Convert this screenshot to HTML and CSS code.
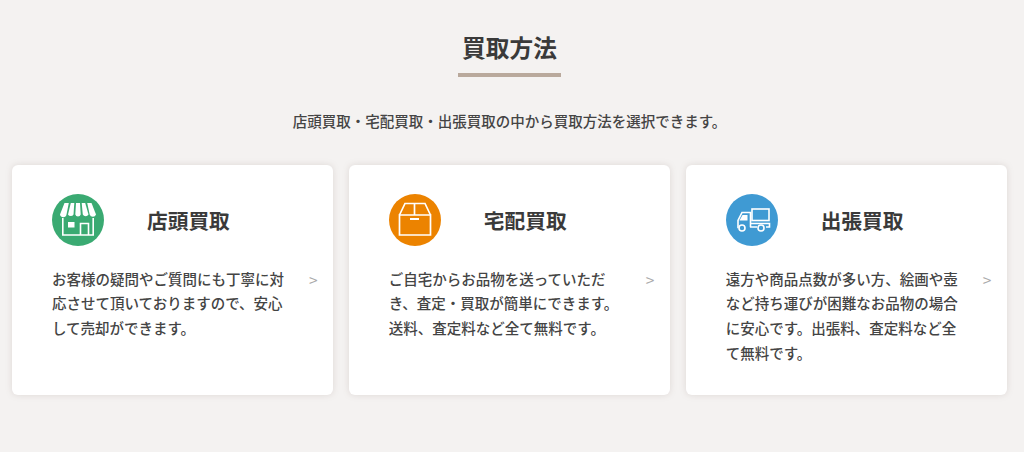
FILE: index.html
```html
<!DOCTYPE html>
<html lang="ja">
<head>
<meta charset="utf-8">
<title>買取方法</title>
<link rel="stylesheet" href="styles.css">
</head>
<body>
<section class="section">
  <h2 class="heading">買取方法</h2>
  <p class="lead">店頭買取・宅配買取・出張買取の中から買取方法を選択できます。</p>
  <div class="cards">
    <a class="card">
      <div class="card-head">
        <span class="icon icon-green">
          <svg viewBox="0 0 52 52" width="52" height="52" fill="none" stroke="#fff">
            <g fill="#fff" stroke="none">
              <path d="M12.500 9h4.300l-2.300 11.500a3.300 3.300 0 0 1-6.500 0z"/>
              <path d="M18.800 9h3.500l-.8 11.500a3.200 3.200 0 0 1-5.500 0z"/>
              <path d="M24 9h4l.7 11.500a2.800 2.800 0 0 1-5.400 0z"/>
              <path d="M29.700 9h3.500l3.300 11.500a3.200 3.200 0 0 1-5.700 0z"/>
              <path d="M35.200 9h4.300l4.500 11.500a3.300 3.300 0 0 1-6.300 0z"/>
            </g>
            <path d="M10.800 24v17h30.400V24" stroke-width="1.600"/>
            <path d="M28.500 41V29.500h8V41" stroke-width="1.600"/>
            <rect x="16" y="28" width="6.500" height="5.500" fill="#fff" stroke="none"/>
          </svg>
        </span>
        <h3 class="card-title">店頭買取</h3>
      </div>
      <div class="card-body">
        <p class="card-text">お客様の疑問やご質問にも丁寧に対応させて頂いておりますので、安心して売却ができます。</p>
        <span class="arrow">&gt;</span>
      </div>
    </a>
    <a class="card">
      <div class="card-head">
        <span class="icon icon-orange">
          <svg viewBox="0 0 52 52" width="52" height="52" fill="none" stroke="#fff" stroke-width="1.700">
            <path d="M10.500 21h31v20h-31z"/>
            <path d="M10.500 21l5.500-11.500h20L41.500 21M25.500 9.500V21"/>
            <rect x="21" y="24" width="9" height="2" fill="#fff" stroke="none"/>
          </svg>
        </span>
        <h3 class="card-title">宅配買取</h3>
      </div>
      <div class="card-body">
        <p class="card-text">ご自宅からお品物を送っていただき、査定・買取が簡単にできます。送料、査定料など全て無料です。</p>
        <span class="arrow">&gt;</span>
      </div>
    </a>
    <a class="card">
      <div class="card-head">
        <span class="icon icon-blue">
          <svg viewBox="0 0 52 52" width="52" height="52" fill="none" stroke="#fff" stroke-width="1.600">
            <rect x="26" y="15" width="17" height="11.500"/>
            <path d="M12.500 33.500h-.5v-7L16 18.500h8.500v14.700M24 33h7M40 33h3.500v-3.500H24.500"/>
            <path d="M16.500 21h5v5.500h-8z" fill="#fff" stroke="none"/>
            <circle cx="16" cy="34" r="3"/>
            <circle cx="35" cy="34" r="3"/>
          </svg>
        </span>
        <h3 class="card-title">出張買取</h3>
      </div>
      <div class="card-body">
        <p class="card-text">遠方や商品点数が多い方、絵画や壺など持ち運びが困難なお品物の場合に安心です。出張料、査定料など全て無料です。</p>
        <span class="arrow">&gt;</span>
      </div>
    </a>
  </div>
</section>
</body>
</html>
```
FILE: styles.css
```css
* { box-sizing: border-box; }
html, body { margin: 0; padding: 0; }
body {
  background: #f4f2f1;
  color: #333;
  font-family: "Noto Sans CJK JP", "Noto Sans", sans-serif;
  height: 452px;
  overflow: hidden;
}
.section { padding: 30px 17px 0 12px; display: flex; flex-direction: column; align-items: center; }
.heading {
  margin: 0;
  font-size: 23.700px;
  line-height: 34px;
  font-weight: 700;
  padding: 0 4.500px 9px;
  border-bottom: 4px solid #b9a99c;
  color: #3a3a3a;
}
.lead {
  margin: 33px 0 0;
  font-size: 14.500px;
  line-height: 22px;
  font-weight: 500;
  color: #444;
}
.cards {
  width: 100%;
  margin-top: 33px;
  display: grid;
  grid-template-columns: repeat(3, 1fr);
  gap: 15.500px;
}
.card {
  background: #fff;
  border-radius: 6px;
  height: 230px;
  padding: 29px 0 0 40px;
  box-shadow: 0 0 6px rgba(160, 140, 130, .25);
  display: block;
}
.card-head { display: flex; align-items: center; height: 52px; }
.icon { width: 52px; height: 52px; border-radius: 50%; display: block; flex: none; }
.icon svg { display: block; }
.icon-green { background: #3aaa72; }
.icon-orange { background: #ec8300; }
.icon-blue { background: #3f9ad3; }
.card-title {
  margin: 0 0 1px 43px;
  font-size: 20.700px;
  line-height: 30px;
  font-weight: 700;
  color: #3a3a3a;
}
.card-body { display: flex; margin-top: 20.500px; }
.card-text {
  margin: 0;
  width: 233px;
  font-size: 14.500px;
  line-height: 24.800px;
  font-weight: 500;
  color: #444;
}
.arrow {
  margin: 0 0 0 24px;
  font-size: 15.500px;
  line-height: 25px;
  color: #aaa;
}
```
